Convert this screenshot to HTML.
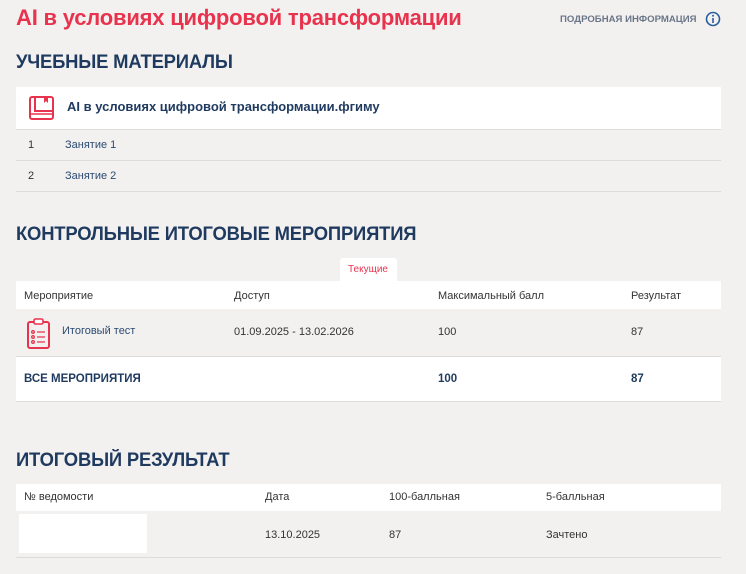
<!DOCTYPE html>
<html><head><meta charset="utf-8"><style>
*{margin:0;padding:0;box-sizing:border-box}
body{width:746px;height:574px;background:#f3f1f0;font-family:"Liberation Sans",sans-serif;position:relative;overflow:hidden;color:#333}
.a{position:absolute;white-space:nowrap}
.h{font-size:19px;font-weight:bold;color:#1f3a5f;letter-spacing:-0.2px;transform:scaleX(0.97);transform-origin:left}
.w{position:absolute;background:#fff}
.l{position:absolute;height:1px;background:#dedcdb}
.t{font-size:11px;color:#333}
.b{font-size:11.5px;color:#1f3a5f;font-weight:bold}
</style></head><body>
<div class="a" style="left:16px;top:5px;font-size:22px;font-weight:bold;color:#e8334e;letter-spacing:-0.2px">AI в условиях цифровой трансформации</div>
<div class="a" style="left:560px;top:14px;font-size:9.6px;font-weight:bold;color:#6a7688">ПОДРОБНАЯ ИНФОРМАЦИЯ</div>
<svg class="a" style="left:705px;top:11px" width="16" height="16" viewBox="0 0 16 16"><circle cx="8" cy="8" r="6.5" fill="none" stroke="#2a5d9c" stroke-width="1.6"/><rect x="7.2" y="7" width="1.6" height="5" fill="#2a5d9c"/><circle cx="8" cy="4.8" r="1" fill="#2a5d9c"/></svg>

<div class="a h" style="left:16px;top:52px">УЧЕБНЫЕ МАТЕРИАЛЫ</div>
<div class="w" style="left:16px;top:87px;width:705px;height:42px"></div>
<svg class="a" style="left:29px;top:96px" width="26" height="25" viewBox="0 0 26 25"><rect x="1" y="1" width="23" height="22" rx="2" fill="none" stroke="#e8334e" stroke-width="2"/><path d="M6 1v14h18" fill="none" stroke="#e8334e" stroke-width="2"/><path d="M15 1v6l2-2 2 2V1z" fill="#e8334e"/><path d="M1 18h23" stroke="#e8334e" stroke-width="1.5"/></svg>
<div class="a" style="left:67px;top:99px;font-size:13px;font-weight:bold;color:#1f3a5f">AI в условиях цифровой трансформации.фгиму</div>
<div class="l" style="left:16px;top:129px;width:705px"></div>
<div class="a t" style="left:28px;top:139px">1</div>
<div class="a t" style="left:65px;top:139px;color:#2b4a70">Занятие 1</div>
<div class="l" style="left:16px;top:160px;width:705px"></div>
<div class="a t" style="left:28px;top:170px">2</div>
<div class="a t" style="left:65px;top:170px;color:#2b4a70">Занятие 2</div>
<div class="l" style="left:16px;top:191px;width:705px"></div>

<div class="a h" style="left:16px;top:224px">КОНТРОЛЬНЫЕ ИТОГОВЫЕ МЕРОПРИЯТИЯ</div>
<div class="w" style="left:340px;top:258px;width:57px;height:24px;border-radius:3px 3px 0 0"></div>
<div class="a" style="left:348px;top:264px;font-size:10px;color:#e8334e">Текущие</div>
<div class="w" style="left:16px;top:281px;width:705px;height:28px"></div>
<div class="a t" style="left:24px;top:290px">Мероприятие</div>
<div class="a t" style="left:234px;top:290px">Доступ</div>
<div class="a t" style="left:438px;top:290px">Максимальный балл</div>
<div class="a t" style="left:631px;top:290px">Результат</div>
<svg class="a" style="left:26px;top:318px" width="26" height="32" viewBox="0 0 26 32"><rect x="2" y="4" width="21" height="26" rx="2" fill="none" stroke="#e8334e" stroke-width="2"/><rect x="8" y="1" width="9" height="5" rx="1.5" fill="#fff" stroke="#e8334e" stroke-width="1.6"/><g fill="none" stroke="#e8334e" stroke-width="1.3"><circle cx="7" cy="14" r="1.3"/><circle cx="7" cy="19" r="1.3"/><circle cx="7" cy="24" r="1.3"/><path d="M11 14h8M11 19h8M11 24h8"/></g></svg>
<div class="a t" style="left:62px;top:325px;color:#2b4a70">Итоговый тест</div>
<div class="a t" style="left:234px;top:326px">01.09.2025 - 13.02.2026</div>
<div class="a t" style="left:438px;top:326px">100</div>
<div class="a t" style="left:631px;top:326px">87</div>
<div class="l" style="left:16px;top:356px;width:705px"></div>
<div class="w" style="left:16px;top:357px;width:705px;height:45px;border-bottom:1px solid #dedcdb"></div>
<div class="a b" style="left:24px;top:373px">ВСЕ МЕРОПРИЯТИЯ</div>
<div class="a b" style="left:438px;top:373px">100</div>
<div class="a b" style="left:631px;top:373px">87</div>

<div class="a h" style="left:16px;top:450px">ИТОГОВЫЙ РЕЗУЛЬТАТ</div>
<div class="w" style="left:16px;top:484px;width:705px;height:27px"></div>
<div class="a t" style="left:24px;top:491px">№ ведомости</div>
<div class="a t" style="left:265px;top:491px">Дата</div>
<div class="a t" style="left:389px;top:491px">100-балльная</div>
<div class="a t" style="left:546px;top:491px">5-балльная</div>
<div class="w" style="left:19px;top:514px;width:128px;height:39px"></div>
<div class="a t" style="left:265px;top:529px">13.10.2025</div>
<div class="a t" style="left:389px;top:529px">87</div>
<div class="a t" style="left:546px;top:529px">Зачтено</div>
<div class="l" style="left:16px;top:557px;width:705px"></div>
</body></html>
